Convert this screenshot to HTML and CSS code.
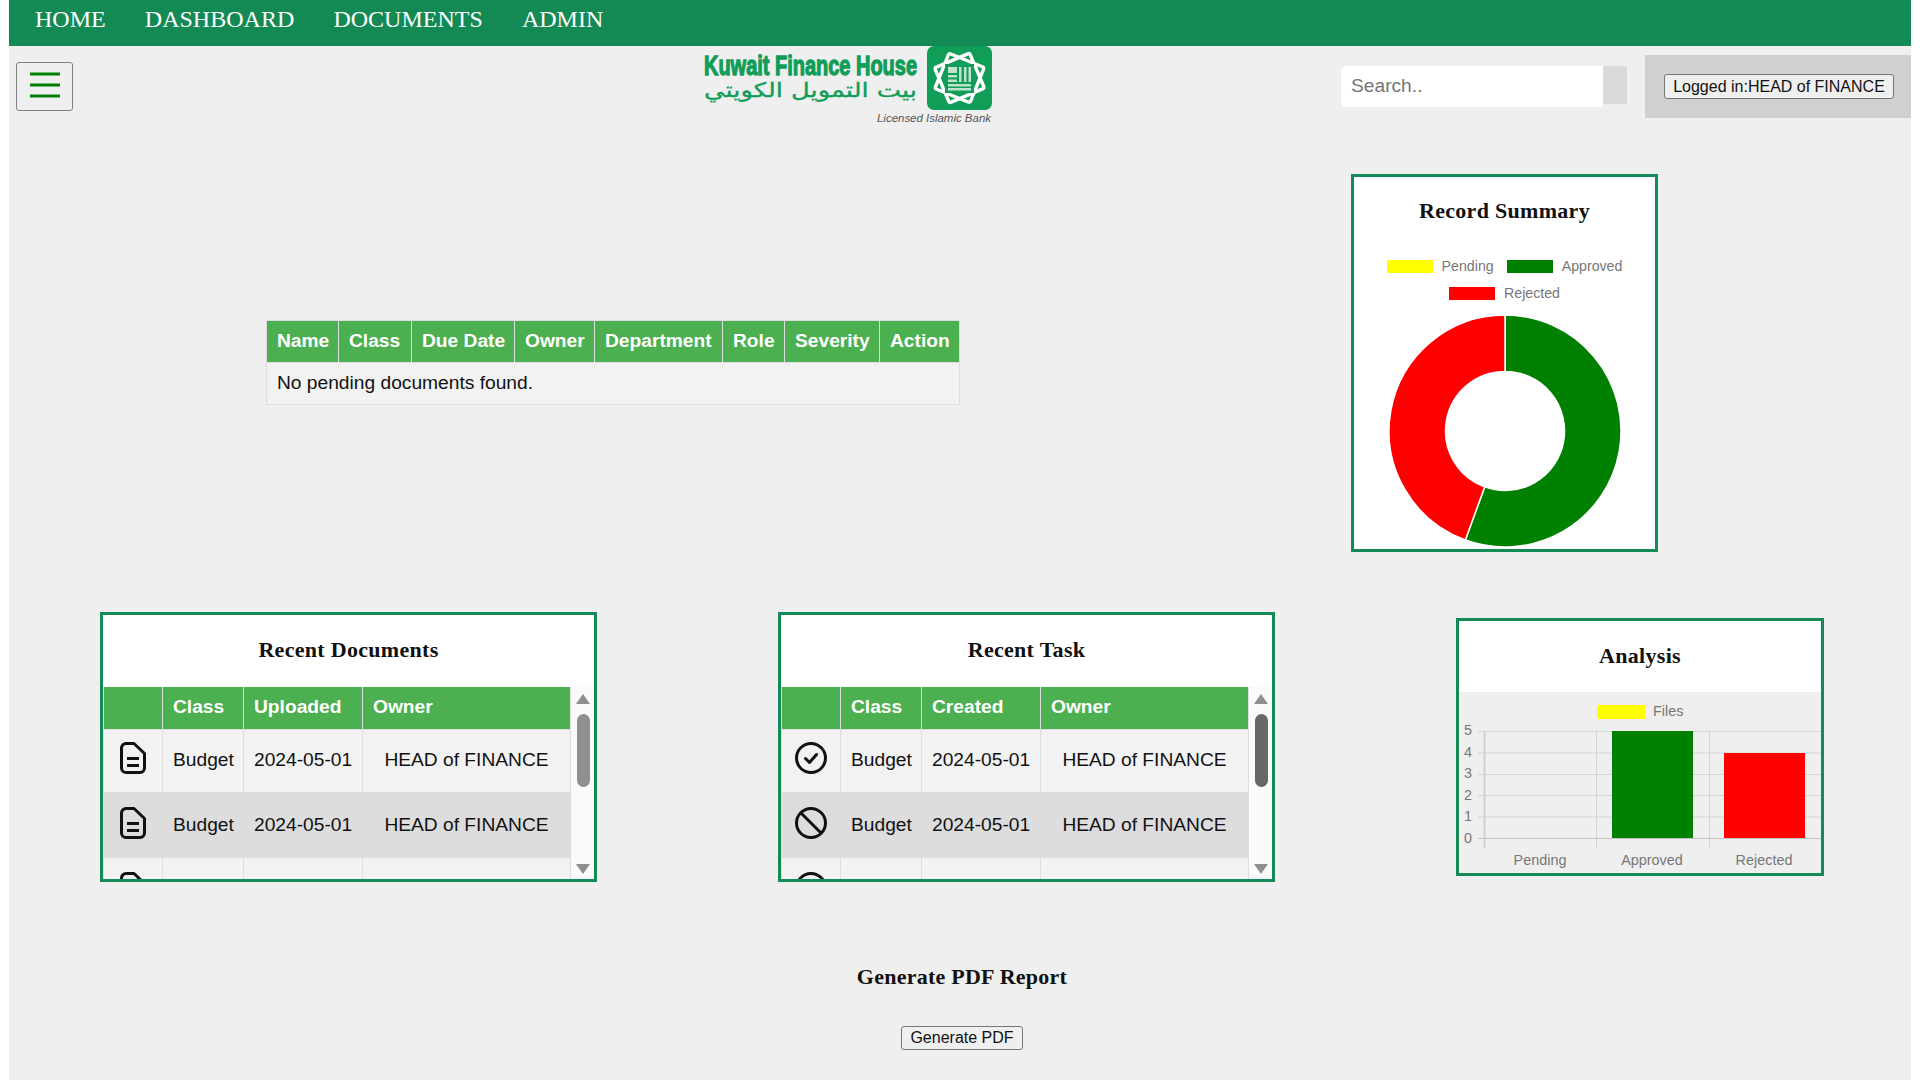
FILE: index.html
```html
<!DOCTYPE html>
<html lang="en">
<head>
<meta charset="utf-8">
<title>Dashboard</title>
<link rel="stylesheet" href="styles.css">
</head>
<body>
<div class="page">
  <nav class="nav">
    <a>HOME</a><a>DASHBOARD</a><a>DOCUMENTS</a><a>ADMIN</a>
  </nav>
  <header class="header">
    <button class="burger" aria-label="menu">
      <svg class="burger-icon" width="30" height="26" viewBox="0 0 30 26"><path d="M0 2h30M0 13h30M0 24h30" stroke="#008000" stroke-width="3.200" stroke-linecap="round"/></svg>
    </button>
    <div class="logo">
      <svg width="290" height="80" viewBox="0 0 290 80">
        <text x="1" y="22.700" transform="scale(1 1.280)" class="logo-en" textLength="213" lengthAdjust="spacingAndGlyphs">Kuwait Finance House</text>
        <text x="1" y="51" class="logo-ar" textLength="213" lengthAdjust="spacingAndGlyphs">بيت التمويل الكويتي</text>
        <g transform="translate(1 0)">
          <rect x="223" y="0" width="65" height="64" rx="7" fill="#0f9d58"/>
          <g fill="none" stroke="#fff" stroke-width="3.400" transform="translate(255.500 32)">
            <rect x="-19" y="-19" width="38" height="38" rx="2" transform="rotate(22)"/>
            <rect x="-19" y="-19" width="38" height="38" rx="2" transform="rotate(67)"/>
          </g>
          <rect x="241" y="18" width="29" height="29" fill="#0f9d58"/>
          <g fill="#bfe3cd">
            <rect x="244" y="21" width="9" height="6"/>
            <rect x="255" y="21" width="2.500" height="15"/>
            <rect x="260" y="21" width="2.500" height="15"/>
            <rect x="264.500" y="21" width="2.500" height="15"/>
            <rect x="244" y="29" width="9" height="2.500"/>
            <rect x="244" y="33.500" width="9" height="2.500"/>
            <rect x="244" y="38" width="23" height="2.500"/>
            <rect x="244" y="42" width="23" height="2.500"/>
          </g>
        </g>
        <text x="288" y="76" class="logo-sub" text-anchor="end" textLength="114" lengthAdjust="spacingAndGlyphs">Licensed Islamic Bank</text>
      </svg>
    </div>
    <div class="search">
      <input class="search-input" type="text" placeholder="Search..">
      <span class="search-btn"></span>
    </div>
    <div class="user-panel"><button class="user-btn">Logged in:HEAD of FINANCE</button></div>
  </header>

  <section class="top-row">
    <table class="grid pending">
      <thead><tr><th>Name</th><th>Class</th><th>Due Date</th><th>Owner</th><th>Department</th><th>Role</th><th>Severity</th><th>Action</th></tr></thead>
      <tbody><tr><td colspan="8">No pending documents found.</td></tr></tbody>
    </table>
    <div class="card summary">
      <h3 class="card-title summary-title">Record Summary</h3>
      <div class="legend">
        <span class="leg"><i class="swatch yellow"></i>Pending</span>
        <span class="leg"><i class="swatch green"></i>Approved</span>
        <span class="leg"><i class="swatch red"></i>Rejected</span>
      </div>
      <svg class="donut" width="234" height="234" viewBox="-117 -117 234 234">
        <path d="M0 -116A116 116 0 1 1 -39.670 109L-20.350 55.900A59.500 59.500 0 1 0 0 -59.500Z" fill="#008000" stroke="#fff" stroke-width="1.500"/>
        <path d="M-39.670 109A116 116 0 0 1 0 -116L0 -59.500A59.500 59.500 0 0 0 -20.350 55.900Z" fill="#f00" stroke="#fff" stroke-width="1.500"/>
      </svg>
    </div>
  </section>

  <section class="card-row">
    <div class="card list-card">
      <h3 class="card-title list-title">Recent Documents</h3>
      <div class="list-body">
        <div class="list-clip">
          <table class="grid list docs">
            <thead><tr><th></th><th>Class</th><th>Uploaded</th><th>Owner</th></tr></thead>
            <tbody>
              <tr><td class="ic"><svg class="icon" viewBox="0 0 26 32"><use href="#i-doc"/></svg></td><td>Budget</td><td>2024-05-01</td><td>HEAD of FINANCE</td></tr>
              <tr><td class="ic"><svg class="icon" viewBox="0 0 26 32"><use href="#i-doc"/></svg></td><td>Budget</td><td>2024-05-01</td><td>HEAD of FINANCE</td></tr>
              <tr><td class="ic"><svg class="icon" viewBox="0 0 26 32"><use href="#i-doc"/></svg></td><td></td><td></td><td></td></tr>
            </tbody>
          </table>
        </div>
        <div class="scrollbar">
          <i class="arrow up"></i><i class="thumb"></i><i class="arrow down"></i>
        </div>
      </div>
    </div>

    <div class="card list-card">
      <h3 class="card-title list-title">Recent Task</h3>
      <div class="list-body">
        <div class="list-clip">
          <table class="grid list tasks">
            <thead><tr><th></th><th>Class</th><th>Created</th><th>Owner</th></tr></thead>
            <tbody>
              <tr><td class="ic"><svg class="icon" viewBox="0 0 32 32"><use href="#i-check"/></svg></td><td>Budget</td><td>2024-05-01</td><td>HEAD of FINANCE</td></tr>
              <tr><td class="ic"><svg class="icon" viewBox="0 0 32 32"><use href="#i-ban"/></svg></td><td>Budget</td><td>2024-05-01</td><td>HEAD of FINANCE</td></tr>
              <tr><td class="ic"><svg class="icon" viewBox="0 0 32 32"><use href="#i-check"/></svg></td><td></td><td></td><td></td></tr>
            </tbody>
          </table>
        </div>
        <div class="scrollbar hot">
          <i class="arrow up"></i><i class="thumb"></i><i class="arrow down"></i>
        </div>
      </div>
    </div>

    <div class="card analysis">
      <h3 class="card-title analysis-title">Analysis</h3>
      <svg class="bars" width="362" height="181" viewBox="0 0 362 181">
        <g stroke="#d4d4d4" stroke-width="1">
          <path d="M19 39.500H362M19 61H362M19 82.500H362M19 103.500H362M19 125H362"/>
          <path d="M137.500 39V156M250.500 39V156"/>
        </g>
        <path d="M25.500 39V156" stroke="#d0d0d0" stroke-width="2"/>
        <path d="M19 146.500H362" stroke="#c4c4c4" stroke-width="1"/>
        <rect x="138" y="13" width="48" height="14" fill="#ff0"/>
        <rect x="153" y="39" width="81" height="107" fill="#008000"/>
        <rect x="265" y="61" width="81" height="85" fill="#f00"/>
        <g class="chart-text">
          <text x="194" y="24">Files</text>
          <g text-anchor="end">
            <text x="13" y="43">5</text><text x="13" y="65">4</text><text x="13" y="86">3</text><text x="13" y="108">2</text><text x="13" y="129">1</text><text x="13" y="151">0</text>
          </g>
          <g text-anchor="middle">
            <text x="81" y="173">Pending</text><text x="193" y="173">Approved</text><text x="305" y="173">Rejected</text>
          </g>
        </g>
      </svg>
    </div>
  </section>

  <section class="pdf">
    <h3 class="pdf-title">Generate PDF Report</h3>
    <button class="pdf-btn">Generate PDF</button>
  </section>
</div>

<svg class="defs" width="0" height="0" aria-hidden="true">
  <defs>
    <symbol id="i-doc" viewBox="0 0 26 32">
      <path d="M6 1.500H14L24.500 11.500V26A4.500 4.500 0 0 1 20 30.500H6A4.500 4.500 0 0 1 1.500 26V6A4.500 4.500 0 0 1 6 1.500Z" fill="none" stroke="#111" stroke-width="3" stroke-linejoin="round"/>
      <path d="M7 16.500H19M7 23.500H19" stroke="#111" stroke-width="3"/>
    </symbol>
    <symbol id="i-check" viewBox="0 0 32 32">
      <circle cx="16" cy="16" r="14.500" fill="none" stroke="#111" stroke-width="3"/>
      <path d="M10.500 16.500L14.500 20.500L21.500 12.500" fill="none" stroke="#111" stroke-width="3" stroke-linecap="round" stroke-linejoin="round"/>
    </symbol>
    <symbol id="i-ban" viewBox="0 0 32 32">
      <circle cx="16" cy="16" r="14.500" fill="none" stroke="#111" stroke-width="3"/>
      <path d="M6 6L26 26" fill="none" stroke="#111" stroke-width="3"/>
    </symbol>
  </defs>
</svg>
</body>
</html>
```
FILE: styles.css
```css
* { box-sizing: border-box; }
html, body { margin: 0; padding: 0; background: #fff; }
body { height: 1080px; overflow: hidden; font-family: "Liberation Sans", Arial, sans-serif; color: #111; }
.page { margin: 0 9px; height: 1080px; background: #efefef; }

.nav { height: 46px; background: #138a54; display: flex; padding-left: 26px; gap: 39.200px; }
.nav a { font: 24px/38px "Liberation Serif", serif; color: #fff; }

.header { height: 72px; display: flex; align-items: flex-start; position: relative; }
.burger { margin: 16px 0 0 7px; width: 57px; height: 49px; background: #efefef; border: 1px solid #808080; border-radius: 3px; padding: 0; display: flex; align-items: center; justify-content: center; flex: none; }
.burger-icon { margin-bottom: 4px; }
.logo { margin-left: 630px; height: 80px; flex: none; }
.logo svg { display: block; }
.logo-en { font: bold 22px "Liberation Sans", sans-serif; fill: #0f9d58; stroke: #0f9d58; stroke-width: 1px; }
.logo-ar { font: 20px "DejaVu Sans", sans-serif; fill: #0f9d58; stroke: #0f9d58; stroke-width: .3px; }
.logo-sub { font: italic 11px "Liberation Sans", sans-serif; fill: #555; }
.search { margin: 20px 0 0 348px; display: flex; width: 286px; align-items: flex-start; flex: none; }
.search-input { width: 262px; height: 41px; border: 0; outline: 0; border-radius: 5px 0 0 5px; background: #fff; padding: 0 10px 2px; font: 19.200px "Liberation Sans", sans-serif; }
.search-input::placeholder { color: #757575; }
.search-btn { width: 24px; height: 38px; background: #dadada; }
.user-panel { margin: 9px 0 0 18px; width: 266px; height: 63px; background: #d0d0d0; padding: 19px 0 0 19px; flex: none; }
.user-btn { width: 230px; height: 25px; padding: 0; background: #efefef; border: 1px solid #767676; border-radius: 3px; font: 16px "Liberation Sans", sans-serif; color: #111; }

.top-row { display: flex; align-items: flex-start; height: 494px; }
.grid { border-collapse: collapse; font-size: 19.200px; }
.grid th { background: #4caf50; color: #fff; font-weight: bold; text-align: left; padding: 0 10px; border: 1px solid #ddd; white-space: nowrap; }
.grid td { background: #f2f2f2; border: 1px solid #ddd; }
.pending { margin: 202px 0 0 257px; width: 694px; height: 85px; flex: none; table-layout: fixed; }
.pending th { height: 42px; padding-bottom: 2px; }
.pending td { padding: 0 10px 2px; }
.pending th:nth-child(1) { width: 72px; }
.pending th:nth-child(2) { width: 73px; }
.pending th:nth-child(3) { width: 103px; }
.pending th:nth-child(4) { width: 80px; }
.pending th:nth-child(5) { width: 128px; }
.pending th:nth-child(6) { width: 62px; }
.pending th:nth-child(7) { width: 95px; }

.card { background: #fff; border: 3px solid #148a56; }
.card-title { margin: 0; text-align: center; font: bold 22px "Liberation Serif", serif; color: #111; letter-spacing: .3px; }
.summary { width: 307px; height: 378px; margin: 56px 0 0 391px; display: flex; flex-direction: column; align-items: center; flex: none; }
.summary-title { margin-top: 21px; }
.legend { margin-top: 34px; width: 260px; display: flex; flex-wrap: wrap; justify-content: center; column-gap: 13px; row-gap: 10px; color: #777; font-size: 14.200px; line-height: 17px; }
.leg { display: flex; align-items: center; gap: 9px; }
.swatch { width: 46px; height: 13px; }
.yellow { background: #ff0; }
.green { background: #008000; }
.red { background: #f00; }
.donut { margin-top: 12px; flex: none; }

.card-row { display: flex; align-items: flex-start; }
.list-card { width: 497px; height: 270px; overflow: hidden; flex: none; }
.list-card + .list-card { margin-left: 181px; }
.card-row > .list-card:first-child { margin-left: 91px; }
.list-title { height: 72px; padding-top: 22px; }
.list-body { display: flex; height: 192px; }
.list-clip { width: 468px; overflow: hidden; background: #fafafa; flex: none; }
.list { width: 468px; table-layout: fixed; margin-top: -1px; }
.list th { height: 43px; padding-bottom: 3px; }
.list td { height: 65px; padding: 0 10px; text-align: center; white-space: nowrap; }
.list tbody tr:nth-child(2) td { background: #ddd; border-color: #ddd; }
.list tbody tr:first-child td { height: 63px; padding-bottom: 2px; }
.docs th:nth-child(1), .tasks th:nth-child(1) { width: 59px; }
.docs th:nth-child(2), .tasks th:nth-child(2) { width: 81px; }
.docs th:nth-child(3), .tasks th:nth-child(3) { width: 119px; }
.list td.ic { padding: 0; line-height: 0; }
.icon { height: 32px; width: auto; display: inline-block; margin-bottom: 5px; }
.scrollbar { width: 23px; background: #fafafa; position: relative; height: 192px; flex: none; }
.arrow { width: 0; height: 0; border-left: 7.500px solid transparent; border-right: 7.500px solid transparent; position: absolute; left: 5px; }
.arrow.up { border-bottom: 10px solid #8f8f8f; top: 7px; }
.arrow.down { border-top: 10px solid #8f8f8f; bottom: 5px; }
.thumb { position: absolute; top: 27px; left: 6px; width: 13px; height: 73px; border-radius: 7px; background: #8f8f8f; }
.hot .thumb { background: #676767; }

.analysis { width: 368px; height: 258px; margin: 6px 0 0 181px; overflow: hidden; flex: none; }
.analysis-title { height: 71px; padding-top: 22px; }
.bars { display: block; background: #efefef; }
.chart-text text { font: 14.400px "Liberation Sans", sans-serif; fill: #777; }
.defs { position: absolute; }

.pdf { display: flex; flex-direction: column; align-items: center; width: 1906px; padding-top: 82px; }
.pdf-title { margin: 0; font: bold 22px "Liberation Serif", serif; color: #111; letter-spacing: .25px; }
.pdf-btn { margin-top: 36px; width: 122px; height: 24px; padding: 0; background: #efefef; border: 1px solid #767676; border-radius: 3px; font: 16px "Liberation Sans", sans-serif; color: #111; }
```
